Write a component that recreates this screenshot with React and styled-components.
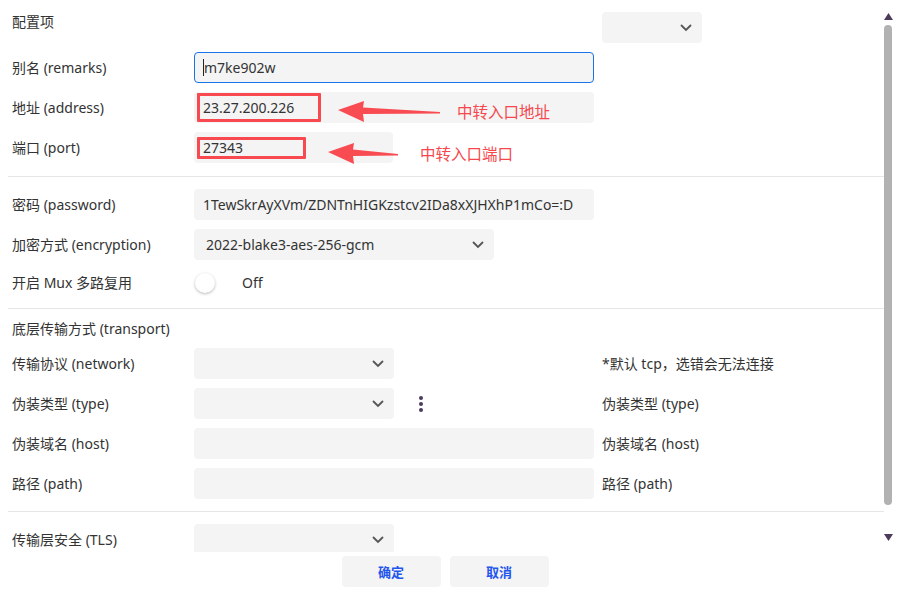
import styled, { createGlobalStyle } from "styled-components";

const GlobalStyle = createGlobalStyle`
  html, body {
    margin: 0;
    padding: 0;
    background: #fff;
  }
  body {
    font-family: "Noto Sans", "Noto Sans CJK SC", sans-serif;
    font-size: 14px;
    color: #333;
  }
  * { box-sizing: border-box; }
`;

const Page = styled.div`
  width: 900px;
  height: 600px;
  display: flex;
  flex-direction: column;
  overflow: hidden;
`;

const Body = styled.div`
  height: 552px;
  display: flex;
`;

const Content = styled.div`
  flex: 1;
  overflow: hidden;
`;

const Section = styled.section`
  display: flex;
  flex-direction: column;
  gap: 9px;
  padding: ${(p) => p.$pad || "12px 0 13px"};
`;

const Divider = styled.hr`
  margin: 0 0 0 8px;
  border: none;
  border-top: 1px solid #e6e6e6;
`;

const Row = styled.div`
  display: grid;
  grid-template-columns: 174px 400px 1fr;
  column-gap: 8px;
  align-items: center;
  height: ${(p) => p.$h || "31px"};
  padding-left: 12px;
`;

const Label = styled.span`
  font-size: 14px;
  color: #333;
  white-space: nowrap;
  padding-bottom: 2px;
  align-self: ${(p) => (p.$top ? "start" : "center")};
  margin-top: ${(p) => (p.$top ? "-1px" : "0")};
`;

const Note = styled(Label)``;

const Cell = styled.div`
  position: relative;
  display: flex;
  align-items: center;
  gap: 18px;
  height: 100%;
`;

const Field = styled.div`
  width: ${(p) => p.$w || "400px"};
  height: 31px;
  background: #f4f4f4;
  border-radius: 4px;
  border: 1px solid ${(p) => (p.$focus ? "#1a73e8" : "transparent")};
  display: flex;
  align-items: center;
  padding: 0 0 0 8px;
  font-size: 14px;
  color: #333;
  white-space: nowrap;
  overflow: hidden;
`;

const Caret = styled.span`
  display: inline-block;
  width: 1px;
  height: 17px;
  background: #222;
`;

const SelectBox = styled.div`
  width: ${(p) => p.$w || "200px"};
  height: 31px;
  background: #f4f4f4;
  border-radius: 4px;
  display: flex;
  align-items: center;
  justify-content: space-between;
  padding: 0 10px 0 12px;
  font-size: 14px;
  color: #333;
`;

const Chevron = () => (
  <svg width="12" height="8" viewBox="0 0 12 8">
    <path d="M1.5 1.5 L6 6 L10.5 1.5" fill="none" stroke="#555" strokeWidth="1.8" strokeLinecap="round" />
  </svg>
);

const Select = ({ w, value }) => (
  <SelectBox $w={w}>
    <span>{value}</span>
    <Chevron />
  </SelectBox>
);

const RedBox = styled.div`
  position: absolute;
  left: 3px;
  top: ${(p) => p.$top}px;
  width: ${(p) => p.$w}px;
  height: ${(p) => p.$h}px;
  border: 3px solid #f7494f;
  border-radius: 1px;
  pointer-events: none;
`;

const Annotation = styled.div`
  position: absolute;
  left: ${(p) => p.$left}px;
  top: ${(p) => p.$top}px;
  display: flex;
  align-items: center;
  gap: ${(p) => p.$gap}px;
  color: #f5474d;
  font-size: 15.5px;
  white-space: nowrap;
  pointer-events: none;
`;

const Arrow = ({ len }) => (
  <svg width={len} height="22" viewBox={`0 0 ${len} 22`}>
    <path
      d={`M0 9 L26 0 L25 6.5 L${len} 11 L${len} 12.5 L25 13 L26 21 Z`}
      fill="#f94b52"
    />
  </svg>
);

const ToggleWrap = styled.div`
  display: flex;
  align-items: center;
  gap: 27px;
  padding-left: 1px;
`;

const Knob = styled.div`
  width: 20px;
  height: 20px;
  border-radius: 50%;
  background: #fff;
  box-shadow: 0 1px 3px rgba(0, 0, 0, 0.28);
`;

const ToggleText = styled.span`
  font-size: 14px;
  color: #333;
`;

const Dots = styled.div`
  display: flex;
  flex-direction: column;
  gap: 2px;
  margin-left: 7px;
  span {
    width: 4px;
    height: 4px;
    border-radius: 50%;
    background: #4c3b5a;
  }
`;

const ScrollBar = styled.div`
  width: 16px;
  display: flex;
  flex-direction: column;
  align-items: flex-start;
  padding: 13px 0 0 0;
`;

const Thumb = styled.div`
  width: 8px;
  height: 480px;
  margin: 5px 0 0 0;
  background: #b2b2b2;
  border-radius: 4px;
`;

const ArrowTri = ({ down }) => (
  <svg width="9" height="7" viewBox="0 0 9 7" style={{ marginTop: down ? 29 : 0 }}>
    <path d={down ? "M0 0 L9 0 L4.5 7 Z" : "M0 7 L9 7 L4.5 0 Z"} fill="#4c3b5a" />
  </svg>
);

const Footer = styled.div`
  flex: 1;
  display: flex;
  justify-content: center;
  align-items: flex-start;
  gap: 9px;
  padding: 4px 0 0 0;
  margin-left: -10px;
`;

const Button = styled.button`
  width: 99px;
  height: 31px;
  border: none;
  border-radius: 4px;
  background: #f4f4f4;
  color: #2456ee;
  font-family: "Noto Sans CJK SC", sans-serif;
  font-weight: bold;
  font-size: 13px;
`;

export default function App() {
  return (
    <Page>
      <GlobalStyle />
      <Body>
        <Content>
          <Section>
            <Row>
              <Label $top>配置项</Label>
              <span />
              <Select w="100px" />
            </Row>
            <Row>
              <Label>别名 (remarks)</Label>
              <Field $focus>
                <Caret />
                m7ke902w
              </Field>
            </Row>
            <Row>
              <Label>地址 (address)</Label>
              <Cell>
                <Field>23.27.200.226</Field>
                <RedBox $top={1} $w={124} $h={29} />
                <Annotation $left={144} $top={8} $gap={17}>
                  <Arrow len={102} />
                  <span>中转入口地址</span>
                </Annotation>
              </Cell>
            </Row>
            <Row>
              <Label>端口 (port)</Label>
              <Cell>
                <Field $w="199px">27343</Field>
                <RedBox $top={5} $w={109} $h={22} />
                <Annotation $left={134} $top={10} $gap={22}>
                  <Arrow len={70} />
                  <span>中转入口端口</span>
                </Annotation>
              </Cell>
            </Row>
          </Section>
          <Divider />
          <Section $pad="12px 0 12px">
            <Row>
              <Label>密码 (password)</Label>
              <Field>1TewSkrAyXVm/ZDNTnHIGKzstcv2IDa8xXJHXhP1mCo=:D</Field>
            </Row>
            <Row>
              <Label>加密方式 (encryption)</Label>
              <Select w="300px" value="2022-blake3-aes-256-gcm" />
            </Row>
            <Row $h="27px">
              <Label>开启 Mux 多路复用</Label>
              <ToggleWrap>
                <Knob />
                <ToggleText>Off</ToggleText>
              </ToggleWrap>
            </Row>
          </Section>
          <Divider />
          <Section $pad="9px 0 12px">
            <Row $h="21px">
              <Label>底层传输方式 (transport)</Label>
            </Row>
            <Row>
              <Label>传输协议 (network)</Label>
              <Select />
              <Note>*默认 tcp，选错会无法连接</Note>
            </Row>
            <Row>
              <Label>伪装类型 (type)</Label>
              <Cell>
                <Select />
                <Dots>
                  <span />
                  <span />
                  <span />
                </Dots>
              </Cell>
              <Note>伪装类型 (type)</Note>
            </Row>
            <Row>
              <Label>伪装域名 (host)</Label>
              <Field />
              <Note>伪装域名 (host)</Note>
            </Row>
            <Row>
              <Label>路径 (path)</Label>
              <Field />
              <Note>路径 (path)</Note>
            </Row>
          </Section>
          <Divider />
          <Section $pad="12px 0 0">
            <Row>
              <Label>传输层安全 (TLS)</Label>
              <Select />
            </Row>
          </Section>
        </Content>
        <ScrollBar>
          <ArrowTri />
          <Thumb />
          <ArrowTri down />
        </ScrollBar>
      </Body>
      <Footer>
        <Button>确定</Button>
        <Button>取消</Button>
      </Footer>
    </Page>
  );
}
